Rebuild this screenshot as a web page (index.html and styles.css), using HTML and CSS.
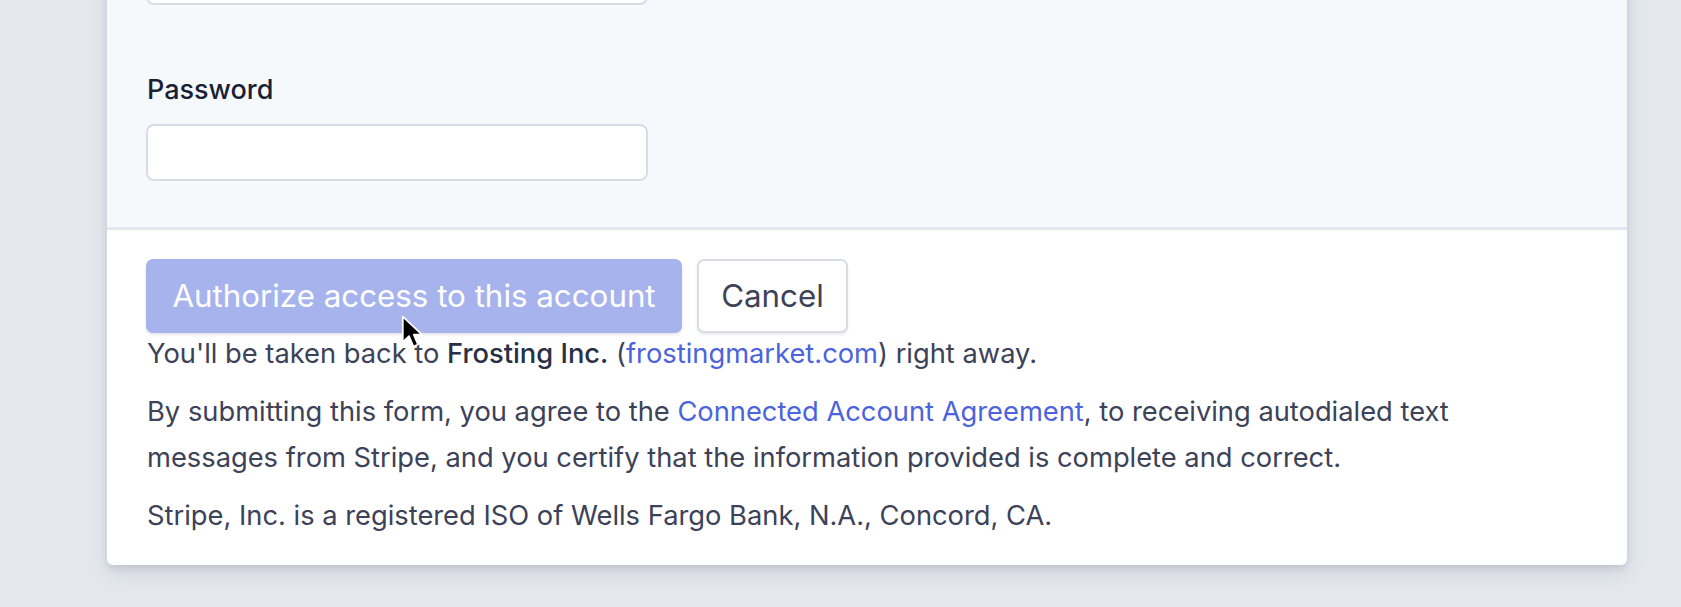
FILE: index.html
```html
<!DOCTYPE html>
<html lang="en">
<head>
<meta charset="utf-8">
<title>Authorize access</title>
<link rel="stylesheet" href="styles.css">
</head>
<body>
<div class="card">
  <div class="card-top">
    <div class="field">
      <input class="input" id="email" type="text" aria-label="Email">
    </div>
    <div class="field">
      <label class="label" for="pw">Password</label>
      <input class="input" id="pw" type="password">
    </div>
  </div>
  <div class="card-bottom">
    <div class="actions">
      <button class="btn btn-primary" type="button">Authorize access to this account</button>
      <button class="btn btn-secondary" type="button">Cancel</button>
    </div>
    <p class="text">You'll be taken back to <strong class="strong">Frosting Inc.</strong> (<a class="link" href="#">frostingmarket.com</a>) right away.</p>
    <p class="text">By submitting this form, you agree to the <a class="link" href="#">Connected Account Agreement</a>, to receiving autodialed text messages from Stripe, and you certify that the information provided is complete and correct.</p>
    <p class="text">Stripe, Inc. is a registered ISO of Wells Fargo Bank, N.A., Concord, CA.</p>
  </div>
</div>
<svg class="cursor" width="25" height="36" viewBox="0 0 22 32" aria-hidden="true">
  <path d="M1.5 1.5 L1.5 24 L7 18.8 L11 28 L15 26.3 L11.2 17.4 L18.5 17.4 Z" fill="#000" stroke="#fff" stroke-width="1.5" stroke-linejoin="round"/>
</svg>
</body>
</html>
```
FILE: styles.css
```css
html, body {
  margin: 0;
  padding: 0;
}
body {
  background: #e4e8ee;
  font-family: Inter, "Noto Sans", "Liberation Sans", sans-serif;
  color: #3c4257;
  height: 607px;
  overflow: hidden;
  position: relative;
}
.card {
  margin: -92px 0 0 107px;
  width: 1520px;
  background: #fff;
  border-radius: 6px;
  box-shadow: 0 8px 18px rgba(50, 50, 93, 0.12), 0 3px 7px rgba(0, 0, 0, 0.08);
  overflow: hidden;
}
.card-top {
  background: #f6f9fc;
  padding: 40px 39px 46px;
  border-bottom: 3px solid #e3e8ee;
  display: flex;
  flex-direction: column;
  gap: 69px;
}
.field {
  display: flex;
  flex-direction: column;
  gap: 18px;
}
.label {
  font-size: 27px;
  line-height: 32px;
  font-weight: 500;
  color: #1a1f36;
  padding-left: 1px;
}
.input {
  box-sizing: border-box;
  width: 502px;
  height: 57px;
  border: 2px solid #d8dde5;
  border-radius: 8px;
  background: #fff;
  margin: 0;
}
.card-bottom {
  padding: 29px 39px 14px;
}
.actions {
  display: flex;
  gap: 15px;
  margin-bottom: -2px;
}
.btn {
  height: 74px;
  border-radius: 7px;
  font-family: Inter, "Noto Sans", "Liberation Sans", sans-serif;
  font-size: 31.3px;
  padding: 0 20px;
  margin: 0;
  cursor: pointer;
  white-space: nowrap;
}
.btn-primary {
  width: 536px;
  background: #a7b3ec;
  border: none;
  color: #fff;
  box-shadow: 0 2px 3px rgba(60, 66, 87, 0.12);
}
.btn-secondary {
  width: 151px;
  background: #fff;
  border: 2px solid #d9dce2;
  color: #3c4257;
  box-shadow: 0 2px 3px rgba(60, 66, 87, 0.1);
}
.text {
  margin: 0 0 12px;
  max-width: 1400px;
  font-size: 27.3px;
  line-height: 46px;
  padding-left: 1px;
}
.strong {
  font-weight: 500;
  color: #2a2f45;
}
.link {
  color: #4b63dc;
  text-decoration: none;
}
.cursor {
  position: absolute;
  left: 401px;
  top: 315px;
}
```
